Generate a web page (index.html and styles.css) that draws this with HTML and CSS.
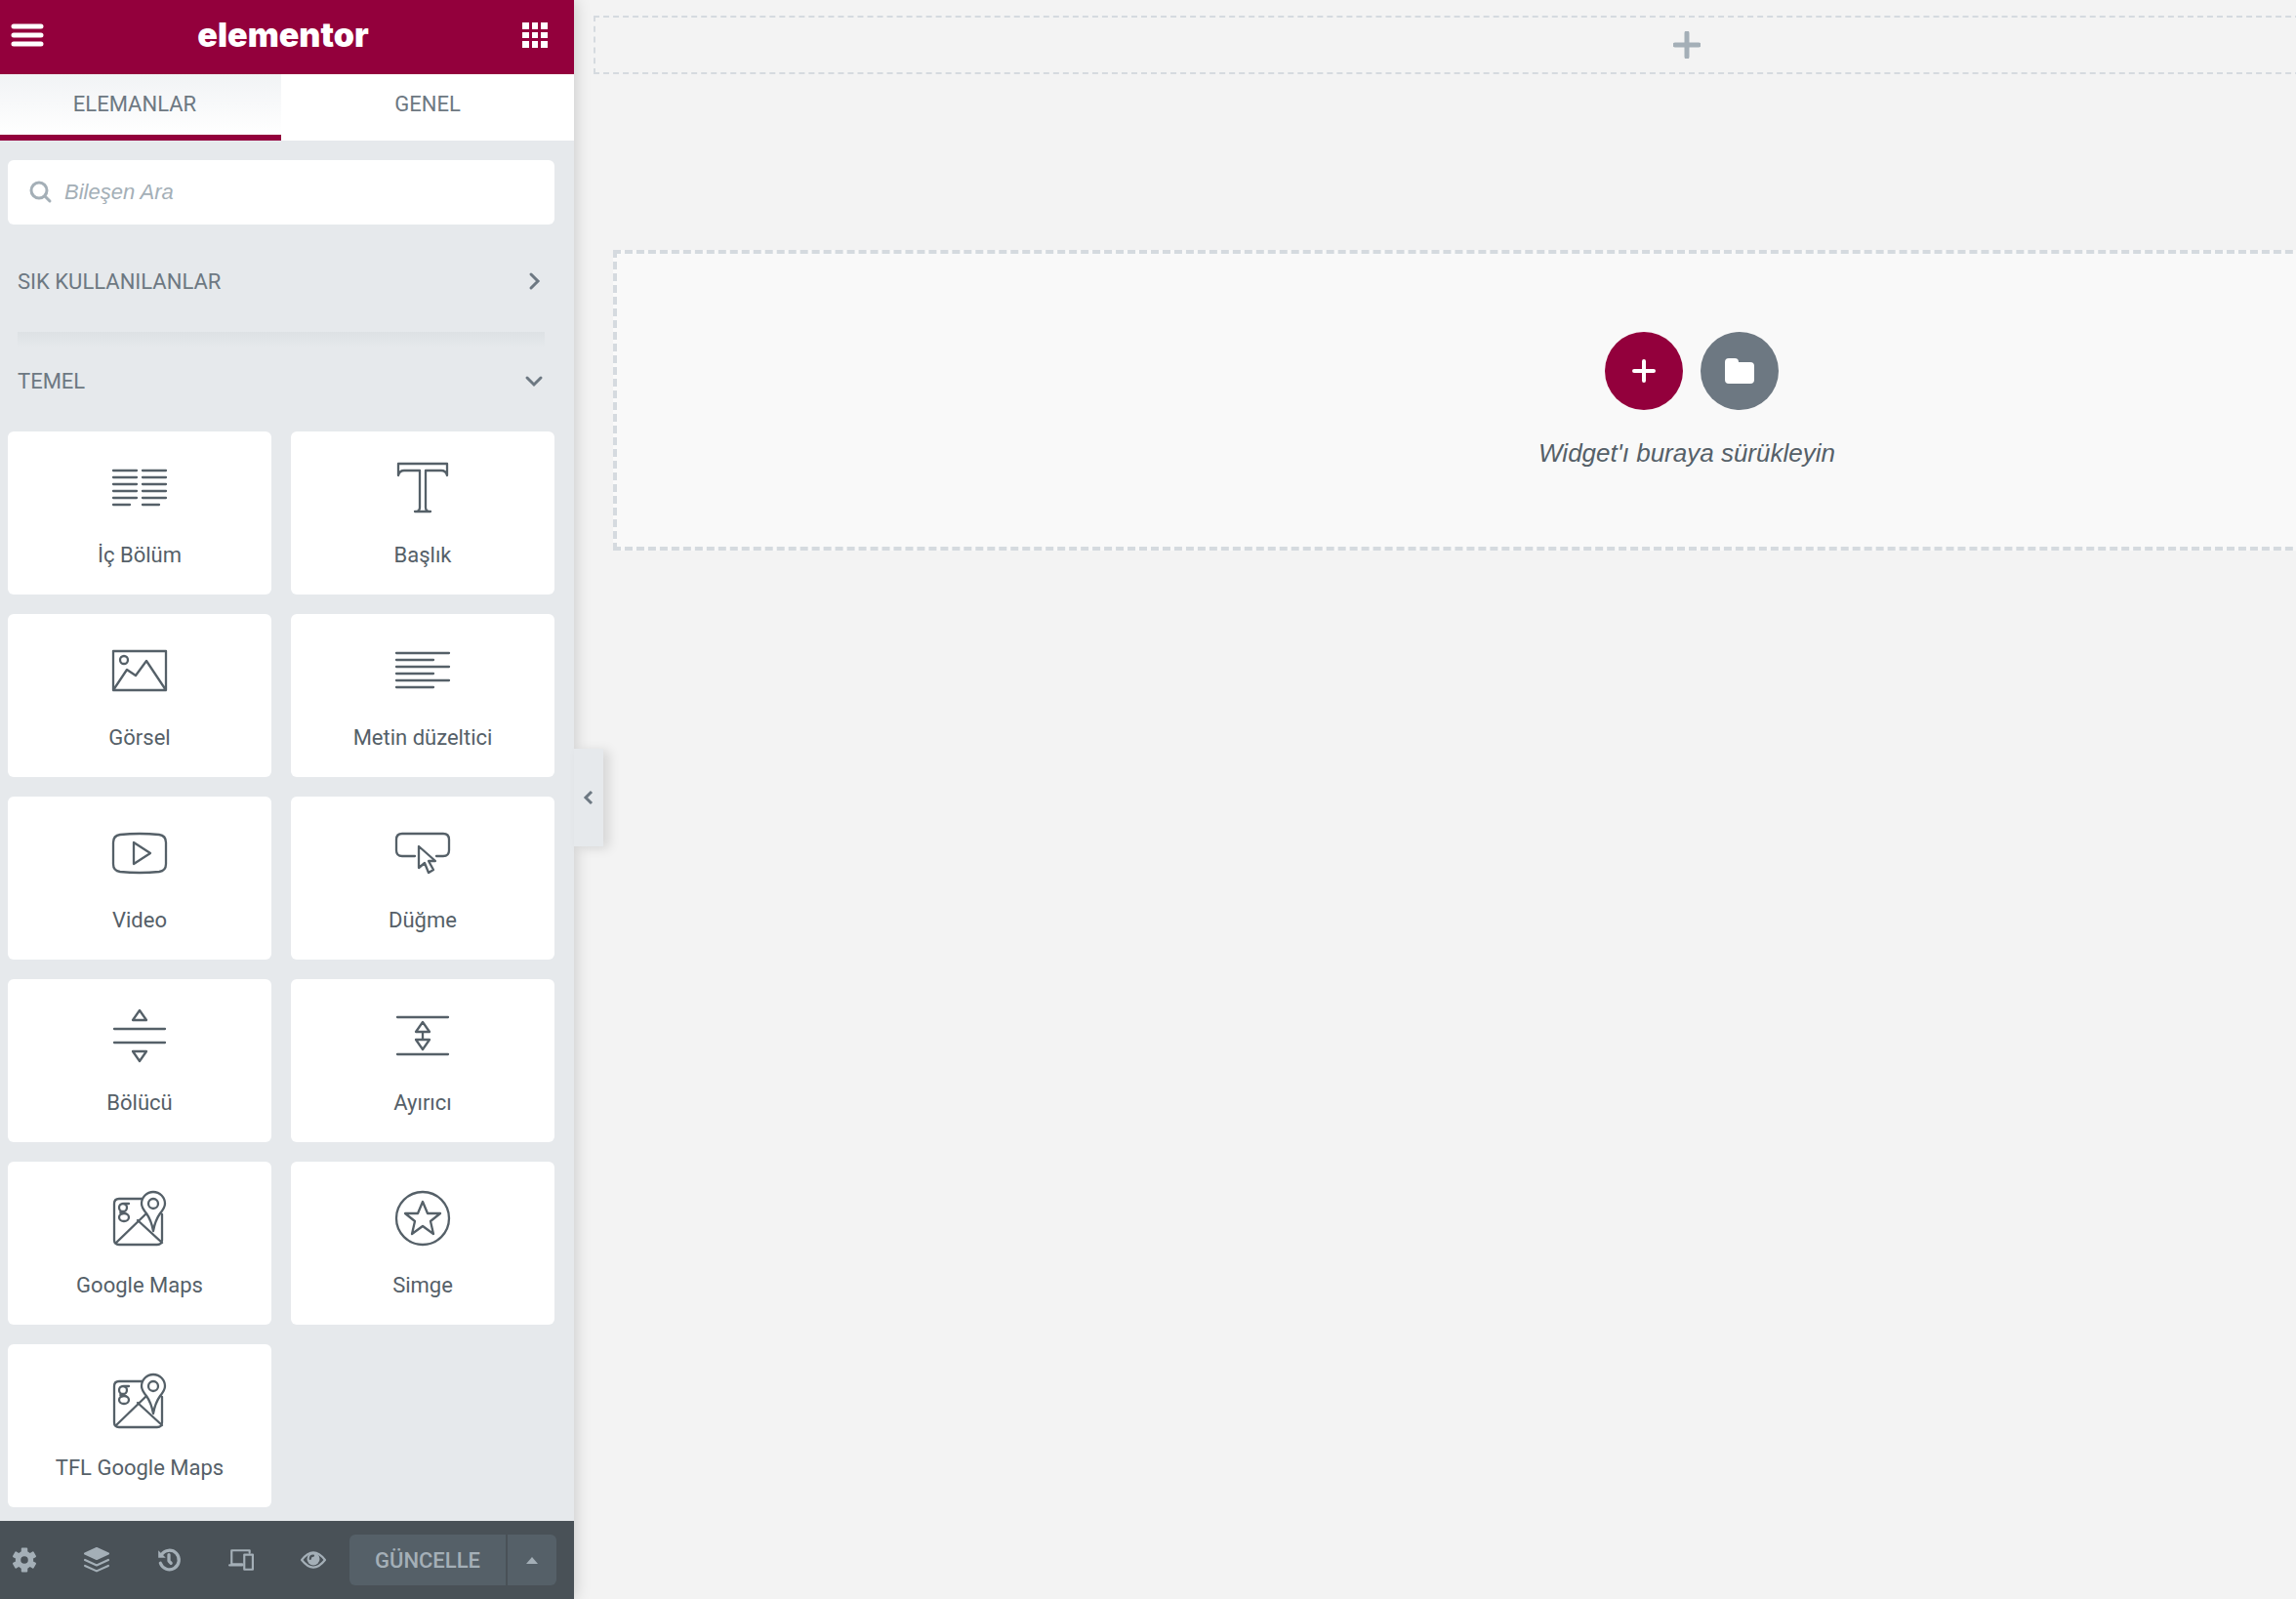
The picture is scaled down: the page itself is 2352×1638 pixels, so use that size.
FILE: index.html
```html
<!DOCTYPE html>
<html lang="tr">
<head>
    <meta charset="UTF-8">
    <meta name="viewport" content="width=device-width, initial-scale=1.0">
    <title>Elementor</title>
    <link rel="stylesheet" href="styles.css">
</head>
<body>
    <aside class="panel">
        <header class="panel-header">
            <button class="header-btn" aria-label="Menü">
                <svg width="34" height="26" viewBox="0 0 34 26">
                    <path d="M3 4h28M3 13h28M3 22h28" stroke="#fff" stroke-width="5" stroke-linecap="round"/>
                </svg>
            </button>
            <h1 class="logo">elementor</h1>
            <button class="header-btn" aria-label="Bileşenler">
                <svg width="26" height="26" viewBox="0 0 26 26" fill="#fff">
                    <path d="M0 0h7v7H0zM10 0h6v7h-6zM19 0h7v7h-7zM0 10h7v6H0zM10 10h6v6h-6zM19 10h7v6h-7zM0 19h7v7H0zM10 19h6v7h-6zM19 19h7v7h-7z"/>
                </svg>
            </button>
        </header>

        <nav class="tabs">
            <button class="tab active">ELEMANLAR</button>
            <button class="tab">GENEL</button>
        </nav>

        <div class="panel-content">
            <label class="search">
                <svg width="24" height="24" viewBox="0 0 24 24" fill="none" stroke="#a4afb7" stroke-width="3" stroke-linecap="round">
                    <circle cx="10" cy="10" r="8"/>
                    <path d="M16 16l5 5"/>
                </svg>
                <input type="text" placeholder="Bileşen Ara" aria-label="Bileşen Ara">
            </label>

            <button class="category">
                <span>SIK KULLANILANLAR</span>
                <svg width="22" height="22" viewBox="0 0 22 22"><path d="M8 4l7 7-7 7"/></svg>
            </button>
            <div class="divider"></div>
            <button class="category">
                <span>TEMEL</span>
                <svg width="22" height="22" viewBox="0 0 22 22"><path d="M4 8l7 7 7-7"/></svg>
            </button>

            <div class="widgets">
                <button class="widget">
                    <svg viewBox="0 0 56 56"><path d="M1 10h24M1 17h24M1 24h24M1 31h24M1 38h24M1 45h17M31 10h24M31 17h24M31 24h24M31 31h24M31 38h24M31 45h17"/></svg>
                    <span>İç Bölüm</span>
                </button>
                <button class="widget">
                    <svg viewBox="0 0 56 56"><path d="M3 3h50v12c-1-4-3-5-6-5H31v38c0 3 2 4 5 4H20c3 0 5-1 5-4V10H9c-3 0-5 1-6 5z"/></svg>
                    <span>Başlık</span>
                </button>
                <button class="widget">
                    <svg viewBox="0 0 56 56"><path d="M1 8h54v40H1zM1 48l14-21 9 6 11-15 20 30"/><circle cx="12" cy="17" r="4"/></svg>
                    <span>Görsel</span>
                </button>
                <button class="widget">
                    <svg viewBox="0 0 56 56"><path d="M1 10h54M1 17h38M1 24h54M1 31h38M1 38h54M1 45h38"/></svg>
                    <span>Metin düzeltici</span>
                </button>
                <button class="widget">
                    <svg viewBox="0 0 56 56"><path d="M8 9q20-2 40 0 7 1 7 8v22q0 7-7 8-20 2-40 0-7-1-7-8V17q0-7 7-8zM22 17l17 11-17 11z"/></svg>
                    <span>Video</span>
                </button>
                <button class="widget">
                    <svg viewBox="0 0 56 56"><path d="M20 31H7q-6 0-6-6V14q0-6 6-6h42q6 0 6 6v11q0 6-6 6h-7M24 21v22l6-5 4 10 5-3-5-9h7z"/></svg>
                    <span>Düğme</span>
                </button>
                <button class="widget">
                    <svg viewBox="0 0 56 56"><path d="M2 21h52M2 35h52M28 2l7 10H21zM28 54l7-10H21z"/></svg>
                    <span>Bölücü</span>
                </button>
                <button class="widget">
                    <svg viewBox="0 0 56 56"><path d="M2 9h52M2 47h52M28 14l7 10H21zM28 42l7-10H21zM28 24v8"/></svg>
                    <span>Ayırıcı</span>
                </button>
                <button class="widget">
                    <svg viewBox="0 0 56 56"><path d="M30 8H7q-5 0-5 5v37q0 5 5 5h39q5 0 5-5V24M4 53l31-30M26 30l25 23M42 41q-2-11-7-18-5-6-5-10a12 12 0 0 1 24 0q0 4-5 10-5 7-7 18z"/><circle cx="42" cy="13" r="5"/><circle cx="11" cy="17" r="4"/><ellipse cx="12" cy="27" rx="5" ry="4"/><path d="M12 13h5M9 21q-2 2 2 2"/></svg>
                    <span>Google Maps</span>
                </button>
                <button class="widget">
                    <svg viewBox="0 0 56 56"><circle cx="28" cy="28" r="27"/><path d="M28 11l5 12h13l-10 8 3 13-11-8-11 8 3-13-10-8h13z"/></svg>
                    <span>Simge</span>
                </button>
                <button class="widget">
                    <svg viewBox="0 0 56 56"><path d="M30 8H7q-5 0-5 5v37q0 5 5 5h39q5 0 5-5V24M4 53l31-30M26 30l25 23M42 41q-2-11-7-18-5-6-5-10a12 12 0 0 1 24 0q0 4-5 10-5 7-7 18z"/><circle cx="42" cy="13" r="5"/><circle cx="11" cy="17" r="4"/><ellipse cx="12" cy="27" rx="5" ry="4"/><path d="M12 13h5M9 21q-2 2 2 2"/></svg>
                    <span>TFL Google Maps</span>
                </button>
            </div>
        </div>

        <footer class="panel-footer">
            <div class="tools">
                <button class="tool" aria-label="Ayarlar">
                    <svg viewBox="0 0 24 24"><g fill="currentColor" stroke="none"><path fill-rule="evenodd" d="M12 3.5a8.5 8.5 0 1 0 0 17 8.5 8.5 0 0 0 0-17zM12 8.5a3.5 3.5 0 1 1 0 7 3.5 3.5 0 0 1 0-7z"/><path id="tooth" d="M9 1.5q0-1 1-1h4q1 0 1 1V5H9z"/><use href="#tooth" transform="rotate(60 12 12)"/><use href="#tooth" transform="rotate(120 12 12)"/><use href="#tooth" transform="rotate(180 12 12)"/><use href="#tooth" transform="rotate(240 12 12)"/><use href="#tooth" transform="rotate(300 12 12)"/></g></svg>
                </button>
                <button class="tool" aria-label="Gezgin">
                    <svg viewBox="0 0 24 24"><path fill="currentColor" d="M12 1l11 5-11 5L1 6z"/><path d="M1 12l11 5 11-5M1 17.5l11 5 11-5"/></svg>
                </button>
                <button class="tool" aria-label="Geçmiş">
                    <svg viewBox="0 0 24 24"><path class="bold" d="M5 7a9 9 0 1 1-1 8M12 7v6l2 2"/><path fill="currentColor" stroke="none" d="M2 3v7h7z"/></svg>
                </button>
                <button class="tool" aria-label="Duyarlı mod">
                    <svg viewBox="0 0 24 24"><path d="M13 16H3V3h17v2M1 17h12M15 7h8v14h-8z"/></svg>
                </button>
                <button class="tool" aria-label="Önizleme">
                    <svg viewBox="0 0 24 24"><path d="M1 12q11-14 22 0-11 14-22 0z"/><circle cx="12" cy="11" r="6" fill="currentColor" stroke="none"/><path d="M9 11q0-3 3-3" stroke="#495157"/></svg>
                </button>
            </div>
            <div class="publish">
                <button class="publish-btn">GÜNCELLE</button>
                <button class="publish-more" aria-label="Kaydetme seçenekleri">
                    <svg width="12" height="7" viewBox="0 0 12 7"><path fill="currentColor" d="M6 0l6 7H0z"/></svg>
                </button>
            </div>
        </footer>

        <button class="panel-toggle" aria-label="Paneli gizle">
            <svg width="12" height="16" viewBox="0 0 12 16"><path d="M9 2L3 8l6 6" fill="none" stroke="currentColor" stroke-width="3"/></svg>
        </button>
    </aside>

    <main class="preview">
        <div class="canvas">
            <button class="add-inline" aria-label="Bölüm ekle">
                <svg width="28" height="28" viewBox="0 0 28 28"><path d="M14 2v24M2 14h24" stroke="currentColor" stroke-width="5" stroke-linecap="round"/></svg>
            </button>
            <section class="add-section">
                <div class="add-buttons">
                    <button class="round-btn add" aria-label="Yeni bölüm ekle">
                        <svg width="24" height="24" viewBox="0 0 24 24"><path d="M12 2v20M2 12h20" stroke="#fff" stroke-width="4" stroke-linecap="round"/></svg>
                    </button>
                    <button class="round-btn" aria-label="Şablon ekle">
                        <svg width="30" height="26" viewBox="0 0 30 26"><path fill="#fff" d="M4 0h6q4 0 4 4h12q4 0 4 4v14q0 4-4 4H4q-4 0-4-4V4q0-4 4-4z"/></svg>
                    </button>
                </div>
                <p class="drop-text">Widget'ı buraya sürükleyin</p>
            </section>
        </div>
    </main>
</body>
</html>
```
FILE: styles.css
```css
* {
    box-sizing: border-box;
    margin: 0;
    padding: 0;
}

body {
    display: flex;
    min-height: 100vh;
    font-family: Roboto, 'Liberation Sans', sans-serif;
    font-size: 22px;
    background: #f3f3f3;
    color: #556068;
}

button {
    font: inherit;
    color: inherit;
    border: none;
    background: none;
    cursor: pointer;
}

svg {
    display: block;
    flex-shrink: 0;
}

/* panel */
.panel {
    position: relative;
    display: flex;
    flex-direction: column;
    flex: 0 0 588px;
    background: #e6e9ec;
    box-shadow: 0 0 16px rgba(0, 0, 0, 0.2);
    z-index: 1;
}

.panel-header {
    display: flex;
    align-items: center;
    justify-content: space-between;
    height: 76px;
    padding: 0 27px 4px 11px;
    background: #93003c;
}

.logo {
    font-family: Inter, sans-serif;
    font-size: 34px;
    font-weight: 900;
    line-height: 40px;
    color: #fff;
}

.tabs {
    display: flex;
    background: #fff;
}

.tab {
    flex: 1;
    height: 68px;
    padding-bottom: 8px;
    color: #6d7882;
}

.tab.active {
    flex: 0 0 288px;
    padding: 0 12px 2px 0;
    background: linear-gradient(#f1f3f5, #fff);
    border-bottom: 6px solid #93003c;
}

.panel-content {
    flex: 1;
    padding: 20px 20px 14px 8px;
}

.search {
    display: flex;
    align-items: center;
    gap: 12px;
    height: 66px;
    padding: 0 22px;
    background: #fff;
    border-radius: 6px;
}

.search input {
    flex: 1;
    border: none;
    outline: none;
    font: italic 22px 'Liberation Sans', sans-serif;
    color: #556068;
}

.search input::placeholder {
    color: #a4afb7;
}

.category {
    display: flex;
    align-items: center;
    justify-content: space-between;
    width: 100%;
    height: 104px;
    padding: 0 10px;
    color: #6d7882;
}

.search + .category {
    height: 110px;
    padding-top: 6px;
}

.category svg {
    fill: none;
    stroke: currentColor;
    stroke-width: 3;
    stroke-linecap: round;
}

.divider {
    height: 16px;
    margin: 0 10px -18px;
    background: linear-gradient(#dde1e4, #e6e9ec);
}

.widgets {
    display: grid;
    grid-template-columns: 1fr 1fr;
    gap: 20px;
}

.widget {
    display: flex;
    flex-direction: column;
    align-items: center;
    gap: 27px;
    height: 167px;
    padding-top: 30px;
    background: #fff;
    border-radius: 6px;
}

.widget span {
    line-height: 28px;
}

.widget svg {
    width: 56px;
    height: 56px;
    overflow: visible;
    fill: none;
    stroke: currentColor;
    stroke-width: 2.3;
    stroke-linecap: round;
    stroke-linejoin: round;
}

.panel-footer {
    display: flex;
    align-items: center;
    justify-content: space-between;
    height: 80px;
    padding: 0 18px 0 12px;
    background: #495157;
    color: #a4afb7;
}

.tools {
    display: flex;
    gap: 48px;
}

.tool svg {
    width: 26px;
    height: 26px;
    fill: none;
    stroke: currentColor;
    stroke-width: 2;
    stroke-linecap: round;
    stroke-linejoin: round;
}

.tool .bold {
    stroke-width: 3;
}

.publish {
    display: flex;
    gap: 2px;
    font-weight: 500;
}

.publish-btn,
.publish-more {
    height: 52px;
    background: #556068;
}

.publish-btn {
    width: 160px;
    border-radius: 6px 0 0 6px;
}

.publish-more {
    display: flex;
    align-items: center;
    justify-content: center;
    width: 50px;
    border-radius: 0 6px 6px 0;
}

/* handle on the edge of the panel */
.panel-toggle {
    position: absolute;
    top: 767px;
    left: 100%;
    display: flex;
    align-items: center;
    justify-content: center;
    width: 30px;
    height: 100px;
    background: #e6e9ec;
    color: #6d7882;
    box-shadow: 6px 2px 12px rgba(0, 0, 0, 0.12);
}

/* preview */
.preview {
    flex: 1;
    min-width: 0;
    overflow: hidden;
}

/* the desktop canvas is wider than the visible area */
.canvas {
    margin-right: -516px;
    padding: 16px 20px;
}

.add-inline {
    display: flex;
    align-items: center;
    justify-content: center;
    width: 100%;
    height: 60px;
    border: 2px dashed #d5dadf;
    color: #a4afb7;
}

.add-section {
    display: flex;
    flex-direction: column;
    align-items: center;
    margin: 180px 20px 0;
    padding: 80px 0;
    border: 4px dashed #d5dadf;
    background: #f9f9f9;
}

.add-buttons {
    display: flex;
    gap: 18px;
    padding-left: 10px;
}

.round-btn {
    display: flex;
    align-items: center;
    justify-content: center;
    width: 80px;
    height: 80px;
    border-radius: 50%;
    background: #6d7882;
}

.round-btn.add {
    background: #93003c;
}

.drop-text {
    margin-top: 28px;
    font: italic 26px/32px 'Liberation Sans', sans-serif;
}
```
